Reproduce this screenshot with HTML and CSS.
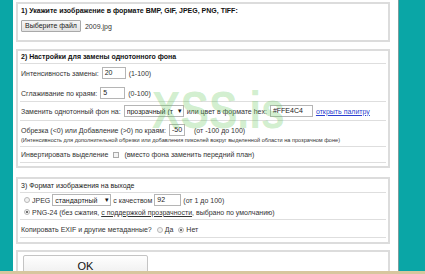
FILE: index.html
```html
<!DOCTYPE html>
<html lang="ru">
<head>
<meta charset="utf-8">
<title>Замена фона</title>
<link rel="stylesheet" href="styles.css">
</head>
<body>
<div class="screen">
  <div class="frame">
    <div class="rail rail-left"></div>
    <main class="main">
      <section class="box box1">
        <div class="title">1) Укажите изображение в формате BMP, GIF, JPEG, PNG, TIFF:</div>
        <div class="filerow"><span class="btn-file">Выберите файл</span><span>2009.jpg</span></div>
      </section>

      <section class="box box2">
        <div class="head title">2) Настройки для замены однотонного фона</div>
        <div class="sect sect-a">
          <div class="row r1">Интенсивность замены: <span class="inp w24">20</span><span class="hint">(1-100)</span></div>
          <div class="row r2">Сглаживание по краям: <span class="inp w25">5</span><span class="hint">(0-100)</span></div>
        </div>
        <div class="sect sect-b">
          <div class="row">Заменить однотонный фон на: <span class="sel w60"><span class="sel-text">прозрачный (т</span><span class="arrow">▾</span></span> или цвет в формате hex: <span class="inp w43">#FFE4C4</span> <a class="link" href="#">открыть палитру</a></div>
        </div>
        <div class="sect sect-c">
          <div class="row">Обрезка (&lt;0) или Добавление (&gt;0) по краям: <span class="inp w16">-50</span><span class="hint2">(от -100 до 100)</span></div>
          <div class="small">(Интенсивность для дополнительной обрезки или добавления пикселей вокруг выделенной области на прозрачном фоне)</div>
        </div>
        <div class="sect sect-d">
          <div class="row">Инвертировать выделение <span class="check"></span> (вместо фона заменить передний план)</div>
        </div>
      </section>

      <section class="box box3">
        <div class="head head3">3) Формат изображения на выходе</div>
        <div class="sect sect-e">
          <div class="row"><span class="radio"></span>JPEG <span class="sel w59"><span class="sel-text">стандартный</span><span class="arrow">▾</span></span> с качеством <span class="inp w27">92</span><span class="hint">(от 1 до 100)</span></div>
          <div class="row"><span class="radio on"></span><span>PNG-24 (без сжатия, <span class="ul">с поддержкой прозрачности</span>, выбрано по умолчанию)</span></div>
        </div>
        <div class="sect sect-f">
          <div class="row">Копировать EXIF и другие метаданные? <span class="radio"></span>Да <span class="radio on"></span>Нет</div>
        </div>
      </section>

      <section class="box box4">
        <div class="okbtn">OK</div>
      </section>
    </main>
    <div class="rail rail-right"></div>
  </div>
  <div class="taskbar"></div>
  <div class="watermark">XSS.is</div>
</div>
</body>
</html>
```

FILE: styles.css
```css
* { box-sizing: border-box; }

body {
  margin: 0;
  font-family: "Liberation Sans", Arial, sans-serif;
  font-size: 7px;
  color: #333;
  background: #fff;
}

.screen {
  position: relative;
  width: 425px;
  height: 274px;
  overflow: hidden;
}

.frame {
  display: flex;
  height: 271px;
}

.rail-left {
  width: 13px;
  background: #0aa6a6;
}

.rail-right {
  width: 27px;
  background: #0aa6a6;
  border-left: 1px solid #7a9e9e;
}

.main {
  flex: 1;
  padding: 2px 8px 0 3px;
  overflow: hidden;
}

.box {
  border: 2px solid #dcdcdc;
  background: #fff;
}

.title {
  font-weight: bold;
  color: #111;
}

/* box 1 */
.box1 {
  height: 40px;
  padding: 1px 3px 0;
}
.box1 .title {
  height: 12px;
  line-height: 12px;
}
.filerow {
  display: flex;
  align-items: center;
  gap: 4px;
  margin-top: 3px;
}
.btn-file {
  display: inline-block;
  height: 12px;
  line-height: 10px;
  padding: 0 3px;
  border: 1px solid #a9a9a9;
  border-radius: 1px;
  background: linear-gradient(#f6f6f6, #e2e2e2);
  color: #222;
}

/* box 2 */
.box2 {
  margin-top: 7px;
  height: 119px;
}
.head {
  height: 13px;
  line-height: 12px;
  padding: 0 3px;
  margin: 0 2px;
  border-bottom: 1px solid #dedede;
}
.box2 .head { padding: 0 1px; }
.sect {
  margin: 0 2px;
  padding: 0 1px;
  border-bottom: 1px solid #dedede;
}
.row {
  display: flex;
  align-items: center;
  white-space: nowrap;
  gap: 3px;
}
.sect-a { height: 38px; padding-top: 2px; }
.sect-a .r1 { height: 14px; }
.sect-a .r2 { height: 14px; margin-top: 6px; }
.sect-b { height: 19px; }
.sect-b .row { height: 18px; }
.sect-c { height: 26px; padding-top: 2px; }
.sect-c .row { height: 14px; }
.small {
  font-size: 5.6px;
  line-height: 7px;
  white-space: nowrap;
  color: #333;
}
.sect-d { height: 16px; }
.sect-d .row { height: 15px; }

.inp {
  display: inline-block;
  height: 12px;
  line-height: 10px;
  padding: 0 2px;
  border: 1px solid #b5b5b5;
  background: #fff;
  color: #222;
}
.w24 { width: 24px; }
.w25 { width: 25px; }
.w43 { width: 43px; }
.w16 { width: 16px; }
.w27 { width: 27px; }
.hint { margin-left: 0; }
.hint2 { margin-left: 6px; }

.sel {
  display: inline-flex;
  align-items: center;
  height: 12px;
  border: 1px solid #b5b5b5;
  background: #fff;
  padding: 0 1px 0 2px;
  color: #222;
  overflow: hidden;
}
.w60 { width: 60px; }
.w59 { width: 59px; }
.sel-text {
  flex: 1;
  overflow: hidden;
}
.arrow {
  font-size: 7px;
  color: #111;
  padding-left: 1px;
}

.link {
  color: #2a3fd0;
  text-decoration: underline;
}
.ul { text-decoration: underline; }

.check {
  display: inline-block;
  width: 6px;
  height: 6px;
  border: 1px solid #aaa;
  background: #f4f4f4;
  margin: 0 2px;
}

/* box 3 */
.box3 {
  margin-top: 9px;
  height: 67px;
}
.head3 {
  height: 14px;
  line-height: 12px;
  padding: 1px 1px 0;
  color: #222;
}
.sect-e { height: 27px; padding-top: 1px; }
.sect-e .row { height: 12px; gap: 2px; }
.sect-f { height: 18px; padding-top: 2px; }
.sect-f .row { height: 15px; gap: 2px; }

.radio {
  display: inline-block;
  width: 6px;
  height: 6px;
  border-radius: 50%;
  border: 1px solid #b8b8b8;
  background: #f2f2f2;
  margin-left: 3px;
  position: relative;
}
.radio.on::after {
  content: "";
  position: absolute;
  left: 1px;
  top: 1px;
  width: 2px;
  height: 2px;
  border-radius: 50%;
  background: #444;
}

/* box 4 */
.box4 {
  margin-top: 6px;
  height: 40px;
  padding: 3px 5px 0;
}
.okbtn {
  width: 125px;
  height: 24px;
  border: 1px solid #c4c4c4;
  border-radius: 2px;
  background: linear-gradient(#fefefe, #ececec);
  text-align: center;
  font-size: 11px;
  line-height: 20px;
  color: #111;
}

.taskbar {
  height: 3px;
  background: #d7c69e;
}

.watermark {
  position: absolute;
  left: 152px;
  top: 84px;
  font-family: "Liberation Sans", Arial, sans-serif;
  font-weight: bold;
  font-size: 52px;
  line-height: 1;
  color: rgba(100, 200, 90, 0.3);
  transform: scaleX(0.82);
  transform-origin: left top;
  pointer-events: none;
  white-space: nowrap;
}
```
